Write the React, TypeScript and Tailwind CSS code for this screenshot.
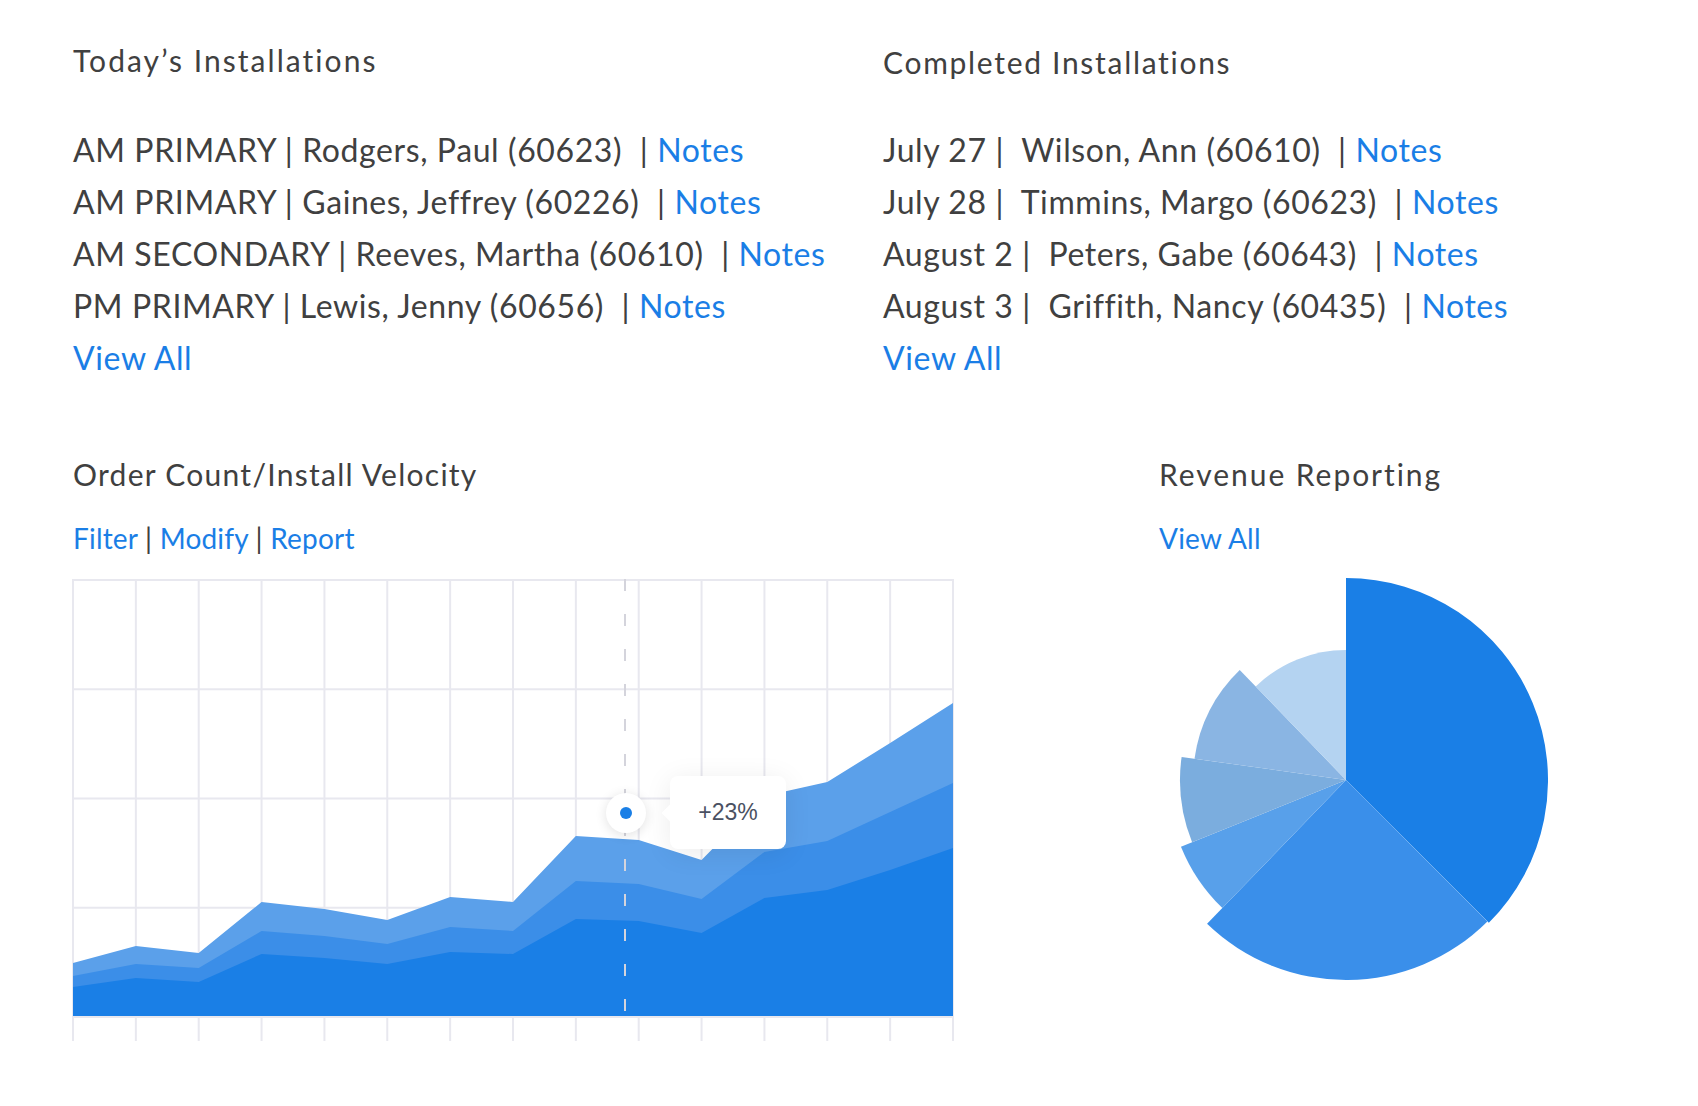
import React from "react";

const today = [
  { slot: "AM PRIMARY", name: "Rodgers, Paul (60623)" },
  { slot: "AM PRIMARY", name: "Gaines, Jeffrey (60226)" },
  { slot: "AM SECONDARY", name: "Reeves, Martha (60610)" },
  { slot: "PM PRIMARY", name: "Lewis, Jenny (60656)" },
];

const completed = [
  { date: "July 27", name: "Wilson, Ann (60610)" },
  { date: "July 28", name: "Timmins, Margo (60623)" },
  { date: "August 2", name: "Peters, Gabe (60643)" },
  { date: "August 3", name: "Griffith, Nancy (60435)" },
];

// chart data, y measured from chart top (height 437)
const topSeries = [383, 366, 373, 322, 329, 340, 317, 322, 256, 260, 280, 216, 202, 163, 123];
const midSeries = [396, 384, 388, 351, 356, 364, 347, 351, 301, 304, 319, 272, 261, 232, 203];
const botSeries = [407, 398, 402, 374, 378, 384, 372, 374, 339, 341, 353, 318, 310, 290, 268];

const W = 880;
const H = 437;
const OX = 1;
const OY = 1;
const step = W / 14;

function areaPath(data: number[]) {
  const pts = data.map((y, i) => `${OX + i * step},${OY + y}`).join(" L");
  return `M${OX},${OY + H} L${pts} L${OX + W},${OY + H} Z`;
}

const slices = [
  { a0: 0, a1: 135, r: 202, color: "#1a7fe6" },
  { a0: 135, a1: 224, r: 200, color: "#3a8fea" },
  { a0: 224, a1: 248, r: 178, color: "#58a0ea" },
  { a0: 248, a1: 278, r: 166, color: "#7badde" },
  { a0: 278, a1: 316, r: 153, color: "#8ab5e3" },
  { a0: 316, a1: 360, r: 130, color: "#b4d3f1" },
];

function slicePath(a0: number, a1: number, r: number) {
  const c = 202;
  const rad = (a: number) => (a * Math.PI) / 180;
  const x0 = c + r * Math.sin(rad(a0));
  const y0 = c - r * Math.cos(rad(a0));
  const x1 = c + r * Math.sin(rad(a1));
  const y1 = c - r * Math.cos(rad(a1));
  const large = a1 - a0 > 180 ? 1 : 0;
  return `M${c},${c} L${x0},${y0} A${r},${r} 0 ${large} 1 ${x1},${y1} Z`;
}

function Sep({ children }: { children: React.ReactNode }) {
  return <span className="whitespace-pre">{children}</span>;
}

function VelocityChart() {
  return (
    <div className="relative w-[882px] h-[462px]">
      <svg width="882" height="462" viewBox="0 0 882 462">
        {Array.from({ length: 15 }).map((_, i) => (
          <line key={"v" + i} x1={OX + i * step} y1={0} x2={OX + i * step} y2={462} stroke="#e8e8ef" strokeWidth="2" />
        ))}
        {Array.from({ length: 4 }).map((_, j) => (
          <line key={"h" + j} x1={0} y1={OY + j * (H / 4)} x2={882} y2={OY + j * (H / 4)} stroke="#e8e8ef" strokeWidth="2" />
        ))}
        <path d={areaPath(topSeries)} fill="#5ba0ea" />
        <path d={areaPath(midSeries)} fill="#3b8ee8" />
        <path d={areaPath(botSeries)} fill="#1a7fe6" />
        <line x1={0} y1={OY + H} x2={882} y2={OY + H} stroke="#e8e8ef" strokeWidth="2" />
        <line x1={553} y1={0} x2={553} y2={OY + H} stroke="#d4d4dc" strokeWidth="2" strokeDasharray="12 23" />
      </svg>
      <div className="absolute left-[534px] top-[214px] w-10 h-10 rounded-full bg-white shadow-[0_2px_12px_rgba(0,0,0,0.12)] flex items-center justify-center">
        <div className="w-3 h-3 rounded-full bg-[#1a7fe6]" />
      </div>
      <div className="absolute left-[598px] top-[197px] w-[116px] h-[73px] rounded-lg bg-white shadow-[0_4px_28px_rgba(0,0,0,0.08)] flex items-center justify-center">
        <div className="absolute left-[-6px] top-[31px] w-3 h-3 rotate-45 bg-white" />
        <span className="relative text-[23px] text-[#4a5162] font-['Liberation_Sans',sans-serif]">+23%</span>
      </div>
    </div>
  );
}

function RevenuePie() {
  return (
    <svg width="404" height="404" viewBox="0 0 404 404" className="ml-[-15px]">
      {slices.map((s) => (
        <path key={s.a0} d={slicePath(s.a0, s.a1, s.r)} fill={s.color} />
      ))}
    </svg>
  );
}

export default function App() {
  return (
    <div className="w-[1698px] h-[1106px] bg-white text-[#404040] font-['Lato',sans-serif] overflow-hidden">
      <div className="pl-[73px] pt-[42px] grid grid-cols-[810px_1fr]">
        <section>
          <h2 className="text-[30px] leading-[36px] tracking-[2.05px]">Today’s Installations</h2>
          <ul className="mt-[46px] text-[32px] leading-[52px] tracking-[0.6px]">
            {today.map((r, i) => (
              <li key={i}>
                {r.slot} | {r.name}
                <Sep>{"  | "}</Sep>
                <a className="text-[#1a7ee6]">Notes</a>
              </li>
            ))}
            <li>
              <a className="text-[#1a7ee6]">View All</a>
            </li>
          </ul>
        </section>
        <section>
          <h2 className="text-[30px] leading-[36px] tracking-[1.7px] pt-[2px]">Completed Installations</h2>
          <ul className="mt-[44px] text-[32px] leading-[52px] tracking-[0.6px]">
            {completed.map((r, i) => (
              <li key={i}>
                <Sep>{r.date + " |  " + r.name + "  | "}</Sep>
                <a className="text-[#1a7ee6]">Notes</a>
              </li>
            ))}
            <li>
              <a className="text-[#1a7ee6]">View All</a>
            </li>
          </ul>
        </section>
      </div>

      <div className="pl-[73px] mt-[72px] flex">
        <section className="w-[1086px]">
          <h2 className="text-[30px] leading-[36px] tracking-[1.27px]">Order Count/Install Velocity</h2>
          <div className="mt-[28px] text-[28px] leading-[36px] tracking-[0.2px]">
            <a className="text-[#1a7ee6]">Filter</a> | <a className="text-[#1a7ee6]">Modify</a> |{" "}
            <a className="text-[#1a7ee6]">Report</a>
          </div>
          <div className="mt-[23px] ml-[-1px]">
            <VelocityChart />
          </div>
        </section>
        <section>
          <h2 className="text-[30px] leading-[36px] tracking-[1.95px]">Revenue Reporting</h2>
          <div className="mt-[28px] text-[28px] leading-[36px] tracking-[0.2px]">
            <a className="text-[#1a7ee6]">View All</a>
          </div>
          <div className="mt-[22px]">
            <RevenuePie />
          </div>
        </section>
      </div>
    </div>
  );
}
